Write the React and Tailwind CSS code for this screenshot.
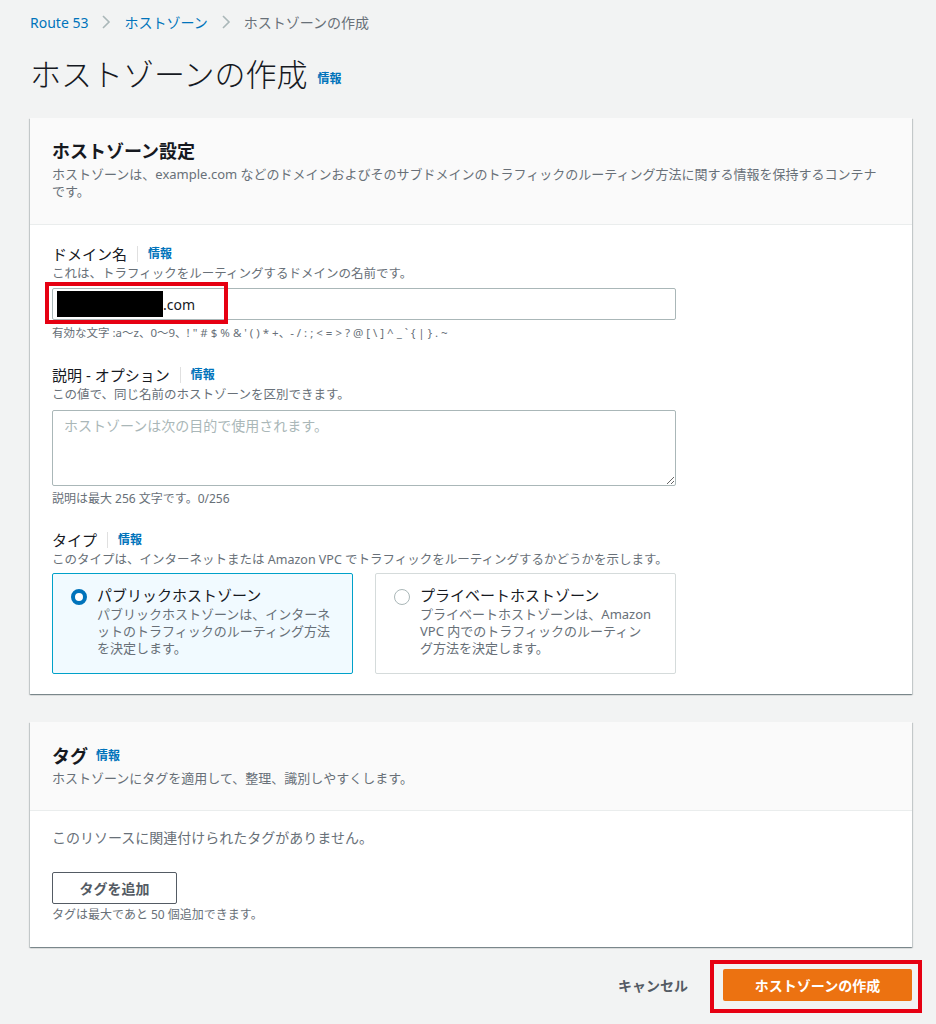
import React from 'react'

const font = { fontFamily: '"Noto Sans", "Noto Sans CJK JP", sans-serif' }

function Info({ sep }) {
  return (
    <span className="flex items-center">
      {sep && <span className="mx-[10px] h-[16px] w-px bg-[#e0e0e0]" />}
      <span className="text-[12px] font-bold text-[#0073bb]">情報</span>
    </span>
  )
}

function Chevron() {
  return (
    <svg width="12" height="16" viewBox="0 0 12 16" className="mx-[12px]">
      <path d="M3 2 L9 8 L3 14" fill="none" stroke="#aab7b8" strokeWidth="1.6" />
    </svg>
  )
}

function Radio({ checked, title, children }) {
  return (
    <div
      className={`flex-1 rounded-[2px] border px-[18px] pt-[10px] pb-[16px] ${
        checked ? 'border-[#00a1c9] bg-[#f1faff]' : 'border-[#d5dbdb] bg-white'
      }`}
    >
      <div className="flex gap-[10px]">
        <div className="pt-[5px]">
          {checked ? (
            <div className="h-[16px] w-[16px] rounded-full border-[4px] border-[#0073bb] bg-white" />
          ) : (
            <div className="h-[16px] w-[16px] rounded-full border border-[#aab7b8] bg-white" />
          )}
        </div>
        <div>
          <div className="text-[15px] leading-[22px] text-[#16191f]">{title}</div>
          <div className="text-[13px] leading-[17px] text-[#687078]">{children}</div>
        </div>
      </div>
    </div>
  )
}

const cardShadow =
  'bg-white shadow-[0_1px_1px_0_rgba(0,28,36,0.3),1px_1px_1px_0_rgba(0,28,36,0.15),-1px_1px_1px_0_rgba(0,28,36,0.15)]'

export default function App() {
  return (
    <div className="min-h-[1024px] bg-[#f2f3f3] pl-[30px] pr-[24px] pt-[10px]" style={font}>
      {/* breadcrumb */}
      <div className="flex h-[24px] items-center text-[14px]">
        <span className="text-[#0073bb]">Route 53</span>
        <Chevron />
        <span className="text-[#0073bb]">ホストゾーン</span>
        <Chevron />
        <span className="text-[#687078]">ホストゾーンの作成</span>
      </div>

      {/* title */}
      <div className="mt-[20px] flex items-end gap-[10px]">
        <h1 className="text-[31px] font-light leading-[40px] text-[#16191f]">ホストゾーンの作成</h1>
        <span className="mb-[6px]"><Info /></span>
      </div>

      {/* settings card */}
      <div className={`mt-[24px] ${cardShadow}`}>
        <div className="h-[107px] border-b border-[#eaeded] bg-[#fafafa] pl-[22px] pr-[30px] pt-[20px]">
          <h2 className="text-[18px] font-bold leading-[26px] text-[#16191f]">ホストゾーン設定</h2>
          <p className="mt-[2px] text-[13px] leading-[17px] text-[#687078]">
            ホストゾーンは、example.com などのドメインおよびそのサブドメインのトラフィックのルーティング方法に関する情報を保持するコンテナです。
          </p>
        </div>

        <div className="px-[22px] pt-[18px] pb-[20px]">
          {/* domain name */}
          <div className="flex items-center text-[15px] leading-[22px] text-[#16191f]">
            ドメイン名
            <Info sep />
          </div>
          <div className="text-[12.5px] leading-[18px] text-[#687078]">これは、トラフィックをルーティングするドメインの名前です。</div>
          <div className="relative mt-[5px] h-[32px] w-[624px] rounded-[2px] border border-[#aab7b8] bg-white">
            <div className="flex h-full items-center pl-[4px]">
              <span className="h-[26px] w-[106px] bg-black" />
              <span className="text-[14px] text-[#16191f]">.com</span>
            </div>
            <div className="absolute left-[-8px] top-[-7px] h-[42px] w-[183px] border-[4px] border-[#e60012]" />
          </div>
          <div className="mt-[5px] text-[11.5px] leading-[16px] text-[#687078]">
            有効な文字 :a～z、0～9、! " # $ % &amp; ' ( ) * +、- / : ; &lt; = &gt; ? @ [ \ ] ^ _ ` &#123; | &#125; . ~
          </div>

          {/* description */}
          <div className="mt-[23px] flex items-center text-[15px] leading-[22px] text-[#16191f]">
            説明 - オプション
            <Info sep />
          </div>
          <div className="text-[12.5px] leading-[18px] text-[#687078]">この値で、同じ名前のホストゾーンを区別できます。</div>
          <textarea
            className="mt-[6px] block h-[76px] w-[624px] rounded-[2px] border border-[#aab7b8] bg-white px-[11px] py-[4px] text-[14px] leading-[22px] outline-none placeholder:text-[#aab7b8]"
            placeholder="ホストゾーンは次の目的で使用されます。"
          />
          <div className="mt-[4px] text-[12px] leading-[18px] text-[#687078]">説明は最大 256 文字です。0/256</div>

          {/* type */}
          <div className="mt-[21px] flex items-center text-[15px] leading-[22px] text-[#16191f]">
            タイプ
            <Info sep />
          </div>
          <div className="text-[12.5px] leading-[18px] text-[#687078]">
            このタイプは、インターネットまたは Amazon VPC でトラフィックをルーティングするかどうかを示します。
          </div>
          <div className="mt-[4px] flex w-[624px] gap-[22px]">
            <Radio checked title="パブリックホストゾーン">
              パブリックホストゾーンは、インターネットのトラフィックのルーティング方法を決定します。
            </Radio>
            <Radio title="プライベートホストゾーン">
              プライベートホストゾーンは、Amazon
              <br />
              VPC 内でのトラフィックのルーティン
              <br />
              グ方法を決定します。
            </Radio>
          </div>
        </div>
      </div>

      {/* tags card */}
      <div className={`mt-[28px] ${cardShadow}`}>
        <div className="h-[89px] border-b border-[#eaeded] bg-[#fafafa] px-[22px] pt-[21px]">
          <div className="flex items-center gap-[8px]">
            <h2 className="text-[18px] font-bold leading-[26px] text-[#16191f]">タグ</h2>
            <Info />
          </div>
          <p className="mt-[1px] text-[13px] leading-[17px] text-[#687078]">
            ホストゾーンにタグを適用して、整理、識別しやすくします。
          </p>
        </div>
        <div className="px-[22px] pt-[16px] pb-[23px]">
          <div className="text-[14px] leading-[22px] text-[#687078]">このリソースに関連付けられたタグがありません。</div>
          <button className="mt-[23px] h-[32px] w-[125px] rounded-[2px] border border-[#545b64] bg-white text-[14px] font-bold text-[#545b64]">
            タグを追加
          </button>
          <div className="mt-[2px] text-[12px] leading-[18px] text-[#687078]">タグは最大であと 50 個追加できます。</div>
        </div>
      </div>

      {/* footer */}
      <div className="mt-[22px] flex items-center justify-end gap-[35px]">
        <span className="text-[14px] font-bold text-[#545b64]">キャンセル</span>
        <div className="relative">
          <button className="h-[32px] w-[189px] rounded-[2px] bg-[#ec7211] text-[14px] font-bold text-white">
            ホストゾーンの作成
          </button>
          <div className="absolute left-[-13px] top-[-9px] h-[53px] w-[212px] border-[4px] border-[#e60012]" />
        </div>
      </div>
    </div>
  )
}
